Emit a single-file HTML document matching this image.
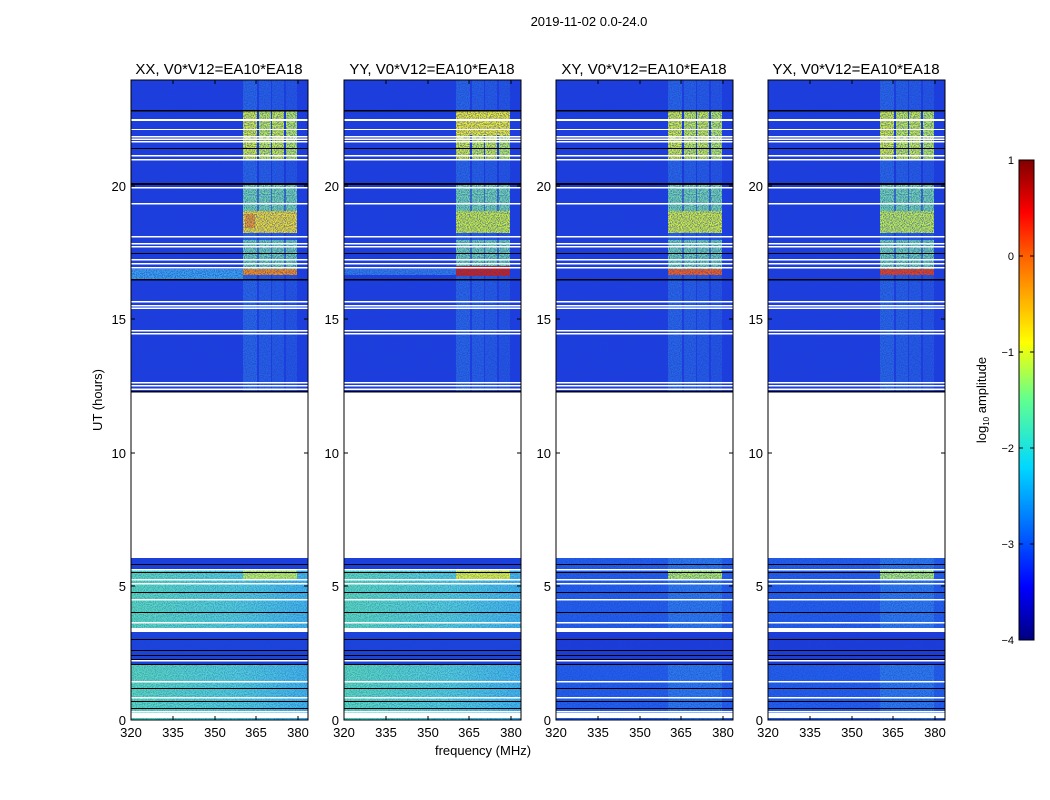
<!DOCTYPE html>
<html><head><meta charset="utf-8"><style>
html,body{margin:0;padding:0;background:#fff;width:1050px;height:800px;overflow:hidden}
svg text{font-family:"Liberation Sans","DejaVu Sans",sans-serif;fill:#000}
</style></head><body>
<svg width="1050" height="800" viewBox="0 0 1050 800" xmlns="http://www.w3.org/2000/svg">
<defs>
<filter id="nz" x="0" y="0" width="100%" height="100%">
<feTurbulence type="fractalNoise" baseFrequency="0.9" numOctaves="1" seed="3"/>
<feColorMatrix type="matrix" values="0 0 0 0 0.02  0 0 0 0 0.05  0 0 0 0 0.5  0 0 0 -4 2.4"/>
</filter>
<linearGradient id="jet" x1="0" y1="1" x2="0" y2="0">
<stop offset="0" stop-color="#000080"/><stop offset="0.11" stop-color="#0000ff"/>
<stop offset="0.36" stop-color="#00d8ff"/><stop offset="0.5" stop-color="#60ff90"/>
<stop offset="0.62" stop-color="#ffff00"/><stop offset="0.8" stop-color="#ff6000"/>
<stop offset="0.89" stop-color="#ff0000"/><stop offset="1" stop-color="#800000"/>
</linearGradient>
<linearGradient id="lowg" x1="0" y1="0" x2="1" y2="0">
<stop offset="0" stop-color="#58dcb8"/><stop offset="0.6" stop-color="#50d0d8"/><stop offset="1" stop-color="#40b8e8"/>
</linearGradient>
<g id="streaks">
<rect x="112" y="0" width="14" height="312" fill="#40c8f0" opacity="0.3"/>
<rect x="128" y="0" width="12" height="312" fill="#40c8f0" opacity="0.25"/>
<rect x="141" y="0" width="12" height="312" fill="#40c8f0" opacity="0.22"/>
<rect x="155" y="0" width="11" height="312" fill="#40c8f0" opacity="0.18"/>
</g>
<g id="lines">
<rect x="0" y="312" width="177" height="166" fill="#fff"/>
<g fill="#fff">
<rect x="0" y="39" width="177" height="2"/><rect x="0" y="49" width="177" height="1"/>
<rect x="0" y="56" width="177" height="1.5"/><rect x="0" y="58.5" width="177" height="1.5"/><rect x="0" y="61" width="177" height="1.5"/>
<rect x="0" y="75" width="177" height="1.5"/><rect x="0" y="79" width="177" height="1.5"/>
<rect x="0" y="107" width="177" height="1.5"/><rect x="0" y="123" width="177" height="1.5"/>
<rect x="0" y="156" width="177" height="1.5"/><rect x="0" y="163" width="177" height="1.5"/><rect x="0" y="166" width="177" height="1.5"/>
<rect x="0" y="179" width="177" height="1.5"/><rect x="0" y="183" width="177" height="1.5"/><rect x="0" y="187" width="177" height="1.5"/>
<rect x="0" y="221" width="177" height="1.5"/><rect x="0" y="225" width="177" height="1.5"/><rect x="0" y="227.5" width="177" height="1.5"/>
<rect x="0" y="250" width="177" height="1.5"/><rect x="0" y="253" width="177" height="1.5"/>
<rect x="0" y="302" width="177" height="1.5"/><rect x="0" y="305" width="177" height="1.5"/><rect x="0" y="308.5" width="177" height="1.5"/>
<rect x="0" y="489" width="177" height="1.5"/><rect x="0" y="499" width="177" height="1.5"/><rect x="0" y="503" width="177" height="1.5"/>
<rect x="0" y="519" width="177" height="1.5"/><rect x="0" y="542" width="177" height="1.5"/><rect x="0" y="548" width="177" height="4"/>
<rect x="0" y="580" width="177" height="1.5"/><rect x="0" y="601" width="177" height="1.5"/><rect x="0" y="617" width="177" height="1.5"/>
<rect x="0" y="631" width="177" height="1.5"/><rect x="0" y="633" width="177" height="5"/>
</g>
<g fill="#000">
<rect x="0" y="30" width="177" height="1.5"/><rect x="0" y="68" width="177" height="1"/><rect x="0" y="103" width="177" height="2"/>
<rect x="0" y="173" width="177" height="1"/><rect x="0" y="199" width="177" height="1.5"/><rect x="0" y="311" width="177" height="1.5"/>
<rect x="0" y="484" width="177" height="1"/><rect x="0" y="492" width="177" height="1"/><rect x="0" y="512" width="177" height="1"/>
<rect x="0" y="532" width="177" height="1"/><rect x="0" y="559" width="177" height="1"/><rect x="0" y="570" width="177" height="1"/>
<rect x="0" y="575" width="177" height="1"/><rect x="0" y="579" width="177" height="1"/><rect x="0" y="584" width="177" height="1"/>
<rect x="0" y="608" width="177" height="1"/><rect x="0" y="621" width="177" height="1"/><rect x="0" y="628" width="177" height="1"/>
</g>
</g>
<g id="blocksTop">
<rect x="112" y="30" width="14" height="50" fill="#d0f040"/><rect x="128" y="30" width="12" height="50" fill="#c0f050"/>
<rect x="141" y="30" width="12" height="50" fill="#c8f048"/><rect x="155" y="30" width="11" height="50" fill="#b8f058"/>
<rect x="112" y="105" width="54" height="26" fill="#80f0a0" opacity="0.85"/>
<rect x="112" y="160" width="54" height="30" fill="#80f0a0" opacity="0.8"/>
<rect x="126" y="30" width="2" height="170" fill="#1838e0" opacity="0.6"/>
<rect x="140" y="30" width="1" height="170" fill="#1838e0" opacity="0.6"/>
<rect x="153" y="30" width="2" height="170" fill="#1838e0" opacity="0.6"/>
</g>
<g id="axes">
<rect x="0" y="0" width="177" height="640" fill="none" stroke="#000" stroke-width="1"/>
<g stroke="#000" stroke-width="1">
<path d="M42 640v-4M84 640v-4M125 640v-4M167 640v-4M42 0v4M84 0v4M125 0v4M167 0v4"/>
<path d="M0 506h4M0 373h4M0 239h4M0 106h4M177 506h-4M177 373h-4M177 239h-4M177 106h-4"/>
</g>
<g font-size="13" text-anchor="middle">
<text x="0" y="657">320</text><text x="42" y="657">335</text><text x="84" y="657">350</text><text x="125" y="657">365</text><text x="167" y="657">380</text>
</g>
<g font-size="13" text-anchor="end">
<text x="-5" y="645">0</text><text x="-5" y="511">5</text><text x="-5" y="378">10</text><text x="-5" y="244">15</text><text x="-5" y="111">20</text>
</g>
</g>
<clipPath id="pc"><rect x="0" y="0" width="177" height="640"/></clipPath>
</defs>

<text x="589" y="26" font-size="13" text-anchor="middle">2019-11-02 0.0-24.0</text>

<!-- Panel XX -->
<g transform="translate(131,80)">
<g clip-path="url(#pc)">
<rect width="177" height="312" fill="#1a3ee8"/>
<use href="#streaks"/>
<rect x="0" y="189" width="112" height="10" fill="#40c0f0" opacity="0.8"/>
<use href="#blocksTop"/>
<rect x="112" y="131" width="54" height="22" fill="#f0e030"/>
<rect x="114" y="134" width="10" height="14" fill="#f0a020"/>
<rect x="112" y="189" width="54" height="6" fill="#ff9010"/>
<rect x="0" y="478" width="177" height="162" fill="url(#lowg)"/>
<rect x="0" y="478" width="177" height="11" fill="#1a40e0"/>
<rect x="0" y="552" width="177" height="33" fill="#1a44e0"/>
<rect x="112" y="490" width="54" height="9" fill="#b8f060"/>
<rect x="0" y="478" width="177" height="162" fill="#000" filter="url(#nz)" opacity="0.35"/>
<rect x="0" y="0" width="177" height="312" fill="#000" filter="url(#nz)" opacity="0.6"/>
<use href="#lines"/>
</g>
<use href="#axes"/>
<text x="88" y="-6" font-size="15" text-anchor="middle">XX, V0*V12=EA10*EA18</text>
</g>

<!-- Panel YY -->
<g transform="translate(344,80)">
<g clip-path="url(#pc)">
<rect width="177" height="312" fill="#1a3ee8"/>
<use href="#streaks"/>
<rect x="0" y="189" width="112" height="6" fill="#40c0f0" opacity="0.5"/>
<use href="#blocksTop"/>
<rect x="112" y="30" width="54" height="25" fill="#f0f030"/>
<rect x="112" y="131" width="54" height="22" fill="#c8f040"/>
<rect x="112" y="186" width="54" height="10" fill="#d02010"/>
<rect x="0" y="478" width="177" height="162" fill="url(#lowg)"/>
<rect x="0" y="478" width="177" height="11" fill="#1a40e0"/>
<rect x="0" y="552" width="177" height="33" fill="#1a44e0"/>
<rect x="112" y="490" width="54" height="9" fill="#d8f040"/>
<rect x="0" y="478" width="177" height="162" fill="#000" filter="url(#nz)" opacity="0.35"/>
<rect x="0" y="0" width="177" height="312" fill="#000" filter="url(#nz)" opacity="0.6"/>
<use href="#lines"/>
</g>
<use href="#axes"/>
<text x="88" y="-6" font-size="15" text-anchor="middle">YY, V0*V12=EA10*EA18</text>
</g>

<!-- Panel XY -->
<g transform="translate(556,80)">
<g clip-path="url(#pc)">
<rect width="177" height="312" fill="#1a3ee8"/>
<use href="#streaks"/>
<use href="#blocksTop"/>
<rect x="112" y="131" width="54" height="22" fill="#d0f040"/>
<rect x="112" y="189" width="54" height="6" fill="#ff6010"/>
<rect x="0" y="478" width="177" height="162" fill="#2060f0"/>
<rect x="112" y="478" width="54" height="162" fill="#40b0f0" opacity="0.35"/>
<rect x="0" y="552" width="177" height="33" fill="#1a3ce0"/>
<rect x="112" y="490" width="54" height="9" fill="#b0f060"/>
<rect x="0" y="478" width="177" height="162" fill="#000" filter="url(#nz)" opacity="0.5"/>
<rect x="0" y="0" width="177" height="312" fill="#000" filter="url(#nz)" opacity="0.6"/>
<use href="#lines"/>
</g>
<use href="#axes"/>
<text x="88" y="-6" font-size="15" text-anchor="middle">XY, V0*V12=EA10*EA18</text>
</g>

<!-- Panel YX -->
<g transform="translate(768,80)">
<g clip-path="url(#pc)">
<rect width="177" height="312" fill="#1a3ee8"/>
<use href="#streaks"/>
<use href="#blocksTop"/>
<rect x="112" y="131" width="54" height="22" fill="#c0f050"/>
<rect x="112" y="189" width="54" height="6" fill="#f04010"/>
<rect x="0" y="478" width="177" height="162" fill="#2060f0"/>
<rect x="112" y="478" width="54" height="162" fill="#40b0f0" opacity="0.35"/>
<rect x="0" y="552" width="177" height="33" fill="#1a3ce0"/>
<rect x="112" y="490" width="54" height="9" fill="#a8f070"/>
<rect x="0" y="478" width="177" height="162" fill="#000" filter="url(#nz)" opacity="0.5"/>
<rect x="0" y="0" width="177" height="312" fill="#000" filter="url(#nz)" opacity="0.6"/>
<use href="#lines"/>
</g>
<use href="#axes"/>
<text x="88" y="-6" font-size="15" text-anchor="middle">YX, V0*V12=EA10*EA18</text>
</g>

<text x="483" y="755" font-size="13" text-anchor="middle">frequency (MHz)</text>
<text transform="translate(102,400) rotate(-90)" font-size="13" text-anchor="middle">UT (hours)</text>

<!-- colorbar -->
<rect x="1019" y="160" width="15" height="480" fill="url(#jet)" stroke="#000" stroke-width="1"/>
<g stroke="#000" stroke-width="1"><path d="M1019 256h4M1034 256h-4M1019 352h4M1034 352h-4M1019 448h4M1034 448h-4M1019 544h4M1034 544h-4"/></g>
<g font-size="11" text-anchor="end">
<text x="1014" y="164">1</text><text x="1014" y="260">0</text><text x="1014" y="356">−1</text>
<text x="1014" y="452">−2</text><text x="1014" y="548">−3</text><text x="1014" y="644">−4</text>
</g>
<text transform="translate(986,400) rotate(-90)" font-size="13" text-anchor="middle">log<tspan font-size="8" dy="3">10</tspan><tspan dy="-3"> amplitude</tspan></text>
</svg>
</body></html>
